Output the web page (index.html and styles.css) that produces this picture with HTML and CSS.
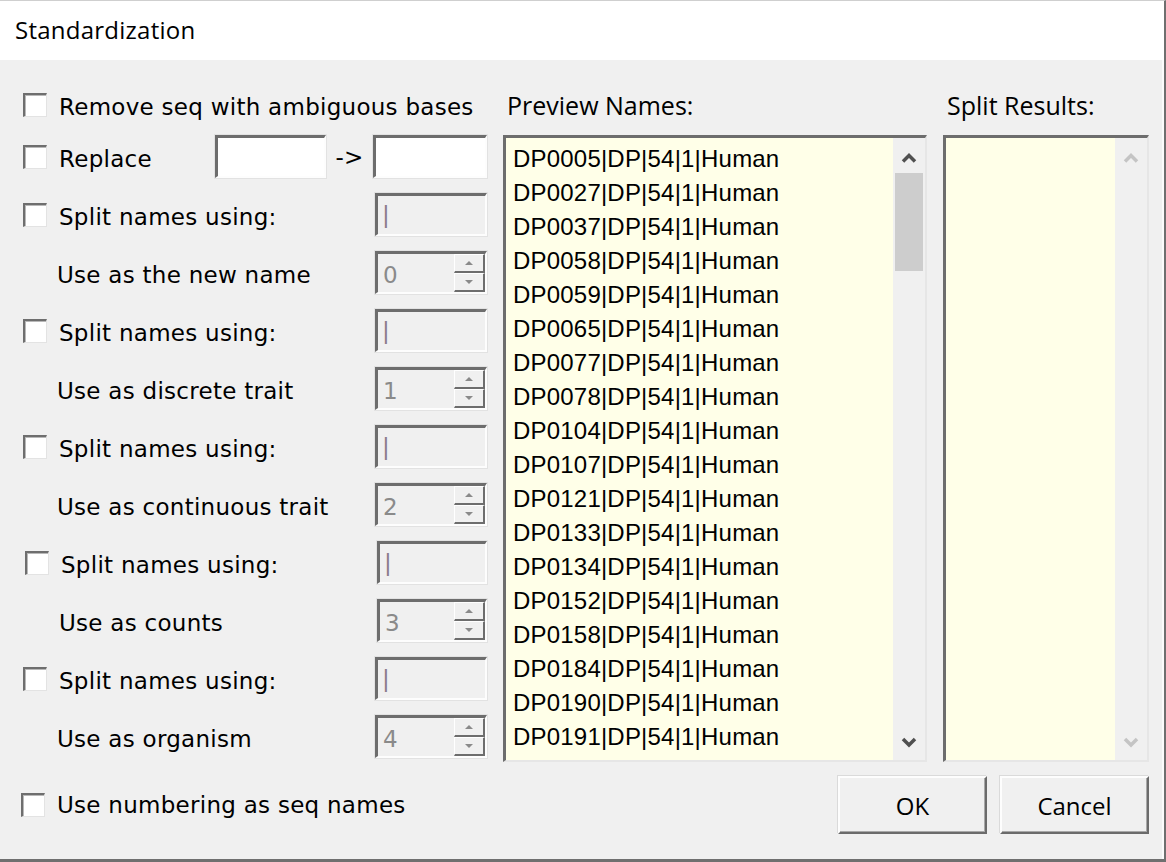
FILE: index.html
```html
<!DOCTYPE html>
<html>
<head>
<meta charset="utf-8">
<title>Standardization</title>
<link rel="stylesheet" href="styles.css">
</head>
<body>
<div class="window">
  <div class="titlebar">Standardization</div>
  <div class="dlg">
    <div class="main">
      <div class="left">
        <div class="row first"><span class="cb"></span><span class="lbl">Remove seq with ambiguous bases</span></div>
        <div class="row second"><span class="cb"></span><span class="lbl fixed">Replace</span><span class="input white w1"></span><span class="arrow">-&gt;</span><span class="input white w2"></span></div>
        <div class="row"><span class="cb"></span><span class="lbl">Split names using:</span><span class="input dis">|</span></div>
        <div class="row sub"><span class="lbl">Use as the new name</span><span class="spin"><span class="val">0</span><span class="btns"><span class="sbtn"><i class="tri up"></i></span><span class="sbtn"><i class="tri dn"></i></span></span></span></div>
        <div class="row"><span class="cb"></span><span class="lbl">Split names using:</span><span class="input dis">|</span></div>
        <div class="row sub"><span class="lbl">Use as discrete trait</span><span class="spin"><span class="val">1</span><span class="btns"><span class="sbtn"><i class="tri up"></i></span><span class="sbtn"><i class="tri dn"></i></span></span></span></div>
        <div class="row"><span class="cb"></span><span class="lbl">Split names using:</span><span class="input dis">|</span></div>
        <div class="row sub"><span class="lbl">Use as continuous trait</span><span class="spin"><span class="val">2</span><span class="btns"><span class="sbtn"><i class="tri up"></i></span><span class="sbtn"><i class="tri dn"></i></span></span></span></div>
        <div class="row shift"><span class="cb"></span><span class="lbl">Split names using:</span><span class="input dis">|</span></div>
        <div class="row sub shift"><span class="lbl">Use as counts</span><span class="spin"><span class="val">3</span><span class="btns"><span class="sbtn"><i class="tri up"></i></span><span class="sbtn"><i class="tri dn"></i></span></span></span></div>
        <div class="row"><span class="cb"></span><span class="lbl">Split names using:</span><span class="input dis">|</span></div>
        <div class="row sub"><span class="lbl">Use as organism</span><span class="spin"><span class="val">4</span><span class="btns"><span class="sbtn"><i class="tri up"></i></span><span class="sbtn"><i class="tri dn"></i></span></span></span></div>
      </div>
      <div class="col mid">
        <div class="hdr">Preview Names:</div>
        <div class="listbox">
          <div class="items">
            <div>DP0005|DP|54|1|Human</div>
            <div>DP0027|DP|54|1|Human</div>
            <div>DP0037|DP|54|1|Human</div>
            <div>DP0058|DP|54|1|Human</div>
            <div>DP0059|DP|54|1|Human</div>
            <div>DP0065|DP|54|1|Human</div>
            <div>DP0077|DP|54|1|Human</div>
            <div>DP0078|DP|54|1|Human</div>
            <div>DP0104|DP|54|1|Human</div>
            <div>DP0107|DP|54|1|Human</div>
            <div>DP0121|DP|54|1|Human</div>
            <div>DP0133|DP|54|1|Human</div>
            <div>DP0134|DP|54|1|Human</div>
            <div>DP0152|DP|54|1|Human</div>
            <div>DP0158|DP|54|1|Human</div>
            <div>DP0184|DP|54|1|Human</div>
            <div>DP0190|DP|54|1|Human</div>
            <div>DP0191|DP|54|1|Human</div>
          </div>
          <div class="sb">
            <svg class="arr" width="32" height="35" viewBox="0 0 32 35"><polyline points="10,23.5 16,17.5 22,23.5" fill="none" stroke="#505050" stroke-width="3.5"/></svg>
            <div class="thumb"></div>
            <div class="track"></div>
            <svg class="arr" width="32" height="35" viewBox="0 0 32 35"><polyline points="10,14 16,20 22,14" fill="none" stroke="#505050" stroke-width="3.5"/></svg>
          </div>
        </div>
      </div>
      <div class="col right">
        <div class="hdr">Split Results:</div>
        <div class="listbox">
          <div class="items"></div>
          <div class="sb">
            <svg class="arr" width="32" height="35" viewBox="0 0 32 35"><polyline points="10,23.5 16,17.5 22,23.5" fill="none" stroke="#c4c4c4" stroke-width="3.5"/></svg>
            <div class="track"></div>
            <svg class="arr" width="32" height="35" viewBox="0 0 32 35"><polyline points="10,14 16,20 22,14" fill="none" stroke="#c4c4c4" stroke-width="3.5"/></svg>
          </div>
        </div>
      </div>
    </div>
    <div class="footer">
      <span class="cb"></span><span class="lbl">Use numbering as seq names</span>
      <button class="btn">OK</button>
      <button class="btn">Cancel</button>
    </div>
  </div>
</div>
</body>
</html>
```

FILE: styles.css
```css
* { box-sizing: border-box; }
html, body { margin: 0; padding: 0; }
body { width: 1166px; height: 862px; overflow: hidden; background: #fff; }

.window {
  width: 1166px;
  height: 862px;
  display: flex;
  flex-direction: column;
  background: #fff;
  border-top: 1px solid #cfcfcf;
  border-right: 2px solid #6f6f6f;
  border-bottom: 3px solid #6f6f6f;
}

.titlebar {
  flex: none;
  height: 59px;
  padding-left: 15px;
  padding-bottom: 2px;
  display: flex;
  align-items: center;
  font: 24px "Open Sans", sans-serif;
  letter-spacing: 0.25px;
  color: #000;
}

.dlg {
  flex: 1;
  background: #f0f0f0;
  border-right: 2px solid #fbfbfb;
  padding: 23px 13px 0 21px;
}

.main { display: flex; gap: 16px; height: 679px; }

.left { width: 466px; display: flex; flex-direction: column; }

.row {
  height: 43px;
  display: flex;
  align-items: center;
  margin-top: 15px;
  font: 23px "DejaVu Sans", sans-serif;
  letter-spacing: 0.27px;
  color: #000;
}
.row.first { margin-top: 0; }
.row.second { margin-top: 9px; }
.row.sub { padding-left: 36px; }
.row.shift { padding-left: 2px; }
.row.sub.shift { padding-left: 38px; }

.lbl { flex: 1; white-space: nowrap; padding-top: 4px; }
.lbl.fixed { flex: none; width: 156px; }

.cb {
  flex: none;
  width: 24px;
  height: 24px;
  margin-left: 2px;
  margin-right: 12px;
  background: #fff;
  border-style: solid;
  border-width: 2px 1px 1px 2px;
  border-color: #6e6e6e #e3e3e3 #e3e3e3 #6e6e6e;
  box-shadow: inset 1px 1px 0 #b8b8b8;
}

.input {
  flex: none;
  width: 112px;
  height: 43px;
  border-style: solid;
  border-width: 3px 2px 2px 3px;
  border-color: #6d6d6d #fdfdfd #fdfdfd #6d6d6d;
  box-shadow: 0 0 0 1px #e2e2e2;
  display: flex;
  align-items: center;
}
.input.white { background: #fff; }
.input.w1 { width: 111px; }
.input.w2 { width: 114px; }
.input.dis { background: #f0f0f0; color: #8a7a8a; padding-left: 4px; font-size: 23px; }
.row.shift .input { width: 110px; }
.row.shift .spin { width: 110px; }

.arrow { flex: none; width: 47px; text-align: center; padding-top: 1px; }

.spin {
  flex: none;
  width: 112px;
  height: 43px;
  display: flex;
  background: #f0f0f0;
  border-style: solid;
  border-width: 3px 2px 2px 3px;
  border-color: #6d6d6d #fdfdfd #fdfdfd #6d6d6d;
  box-shadow: 0 0 0 1px #e2e2e2;
}
.val {
  flex: 1;
  display: flex;
  align-items: center;
  padding-left: 5px;
  padding-top: 4px;
  color: #8a8a8a;
}
.btns { flex: none; width: 31px; display: flex; flex-direction: column; }
.sbtn {
  flex: 1;
  display: flex;
  align-items: center;
  justify-content: center;
  background: #f0f0f0;
  border-style: solid;
  border-width: 1px 2px 2px 1px;
  border-color: #fff #6d6d6d #6d6d6d #fff;
}
.tri { width: 0; height: 0; border-left: 4px solid transparent; border-right: 4px solid transparent; }
.tri.up { border-bottom: 4px solid #8a8a8a; }
.tri.dn { border-top: 4px solid #8a8a8a; }

.col { display: flex; flex-direction: column; }
.mid { width: 424px; }
.right { width: 206px; }

.hdr {
  flex: none;
  height: 43px;
  display: flex;
  align-items: center;
  padding-left: 4px;
  margin-bottom: 9px;
  font: 25px "Open Sans", sans-serif;
  color: #000;
}

.listbox {
  flex: 1;
  display: flex;
  background: #ffffe8;
  border-style: solid;
  border-width: 3px 2px 2px 3px;
  border-color: #6d6d6d #e6e6e6 #e6e6e6 #6d6d6d;
  overflow: hidden;
}
.items {
  flex: 1;
  padding: 4px 0 0 7px;
  font: 24px "Liberation Sans", Arial, sans-serif;
  letter-spacing: 0.2px;
  line-height: 34px;
  color: #000;
  overflow: hidden;
  white-space: nowrap;
}

.sb { flex: none; width: 32px; background: #f0f0f0; display: flex; flex-direction: column; align-items: center; }
.arr { flex: none; display: block; }
.thumb { flex: none; width: 28px; height: 98px; background: #cdcdcd; }
.track { flex: 1; }

.footer {
  display: flex;
  align-items: center;
  margin-top: 14px;
  height: 58px;
  font: 23px "DejaVu Sans", sans-serif;
  letter-spacing: 0.27px;
  color: #000;
}
.footer .cb { margin-left: 0; }
.footer .lbl { flex: 1; padding-top: 0; }

.btn {
  flex: none;
  width: 149px;
  height: 58px;
  margin-left: 13px;
  padding: 0;
  background: #f0f0f0;
  border-style: solid;
  border-width: 2px;
  border-color: #fdfdfd #6b6b6b #6b6b6b #fdfdfd;
  box-shadow: -1px -1px 0 #dadada, inset -1px -1px 0 #a8a8a8;
  font: 24px "Open Sans", sans-serif;
  letter-spacing: 0;
  color: #000;
  display: flex;
  align-items: center;
  justify-content: center;
}
```
